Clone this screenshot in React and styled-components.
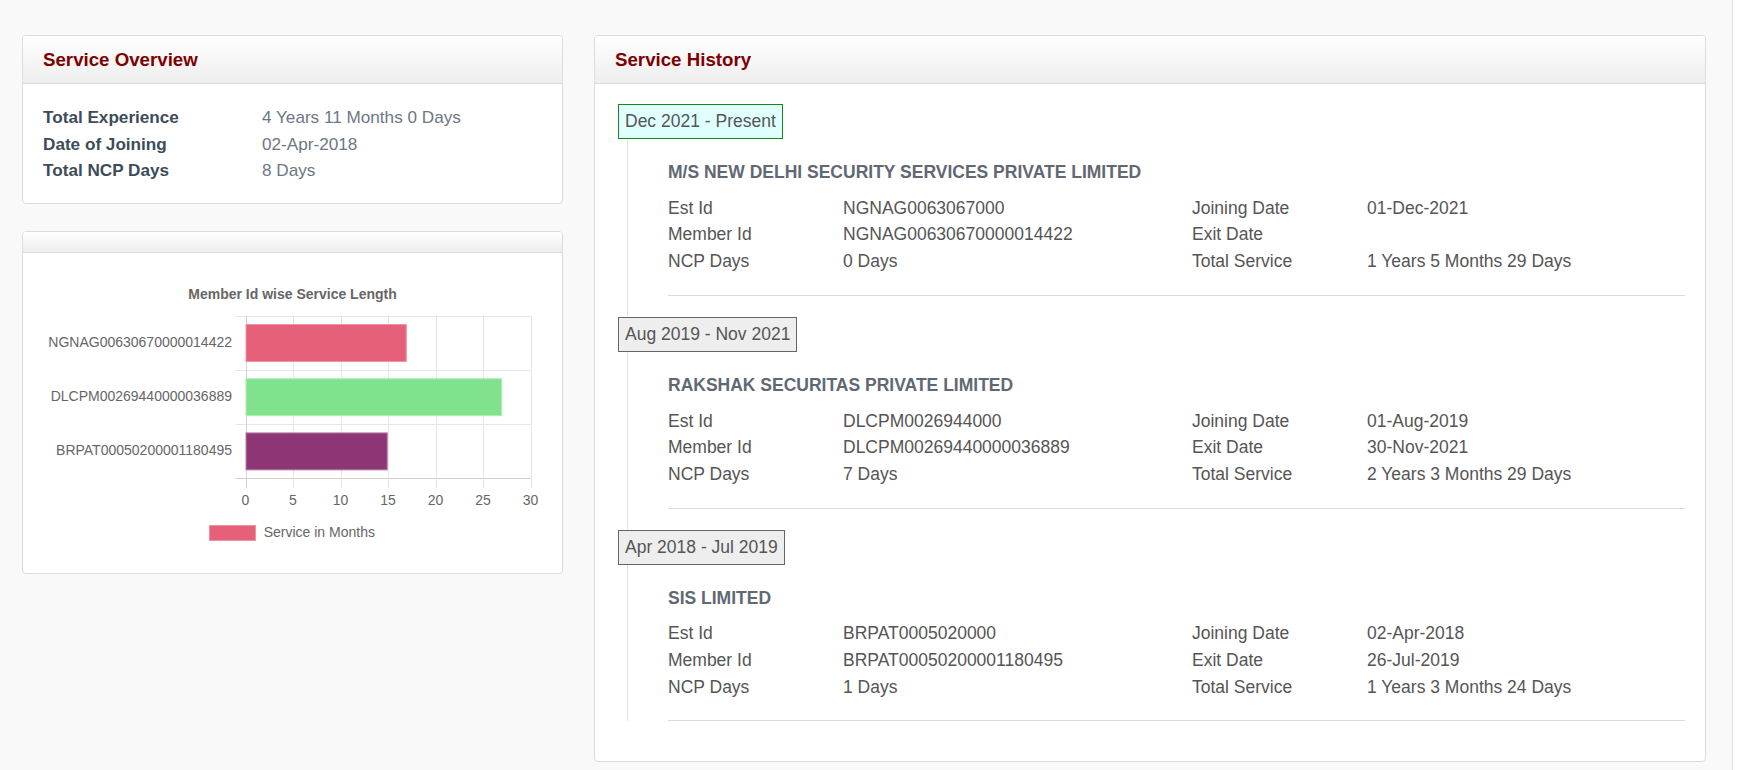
import React from 'react';
import styled, { createGlobalStyle } from 'styled-components';

const GlobalStyle = createGlobalStyle`
  body {
    margin: 0;
    background: #ffffff;
    font-family: "Liberation Sans", Arial, sans-serif;
  }
  * {
    box-sizing: border-box;
  }
`;

const Page = styled.div`
  display: flex;
  align-items: flex-start;
  gap: 31px;
  width: 1733px;
  min-height: 770px;
  padding: 35px 26px 0 22px;
  background: #f9f9f9;
  border-right: 1px solid #e6e6e6;
`;

const LeftColumn = styled.div`
  display: flex;
  flex-direction: column;
  gap: 27px;
  width: 541px;
`;

const Card = styled.div`
  width: ${(p) => p.width || 'auto'};
  background: #ffffff;
  border: 1px solid #dcdcdc;
  border-radius: 4px;
  overflow: hidden;
`;

const CardHeader = styled.div`
  height: ${(p) => (p.empty ? '21px' : '48px')};
  display: flex;
  align-items: center;
  padding: 0 20px;
  background: linear-gradient(to bottom, #ffffff 0%, #eeeeee 100%);
  border-bottom: 1px solid #dcdcdc;
`;

const CardTitle = styled.h3`
  margin: 0;
  font-size: 18.7px;
  font-weight: 700;
  color: #800000;
`;

const OverviewBody = styled.div`
  display: grid;
  grid-template-columns: 219px 1fr;
  padding: 20px 20px 19px 20px;
  font-size: 17.15px;
  line-height: 26.7px;
`;

const OverviewLabel = styled.div`
  font-weight: 700;
  color: #3c4c59;
`;

const OverviewValue = styled.div`
  color: #6c7783;
`;

const ChartSvg = styled.svg`
  display: block;
  font-family: "Liberation Sans", Arial, sans-serif;
`;

const HistoryBody = styled.div`
  padding: 20px 20px 40px 23px;
`;

const PeriodBadge = styled.div`
  display: inline-block;
  height: 35px;
  padding: 0 6px;
  line-height: 33px;
  font-size: 17.5px;
  color: #555555;
  border: 1px solid ${(p) => (p.current ? '#138a13' : '#666666')};
  background: ${(p) => (p.current ? '#e0ffff' : '#eeeeee')};
`;

const TimelineContent = styled.div`
  margin-left: 9px;
  border-left: 1px solid #e6e6e6;
  padding: 20px 0 ${(p) => (p.last ? '0' : '21px')} 40px;
`;

const CompanyName = styled.div`
  font-size: 17.5px;
  line-height: 26.7px;
  font-weight: 700;
  color: #5f6873;
  text-transform: uppercase;
`;

const DetailGrid = styled.div`
  display: grid;
  grid-template-columns: 175px 349px 175px 1fr;
  margin-top: 9px;
  font-size: 17.5px;
  line-height: 26.7px;
  color: #555555;
`;

const Separator = styled.hr`
  margin: 20px 0 0 0;
  border: 0;
  border-top: 1px solid #dadada;
`;

const overview = [
  ['Total Experience', '4 Years 11 Months 0 Days'],
  ['Date of Joining', '02-Apr-2018'],
  ['Total NCP Days', '8 Days'],
];

const history = [
  {
    period: 'Dec 2021 - Present',
    current: true,
    company: 'M/S New Delhi Security Services Private Limited',
    estId: 'NGNAG0063067000',
    memberId: 'NGNAG00630670000014422',
    ncp: '0 Days',
    joining: '01-Dec-2021',
    exit: '',
    total: '1 Years 5 Months 29 Days',
  },
  {
    period: 'Aug 2019 - Nov 2021',
    company: 'Rakshak Securitas Private Limited',
    estId: 'DLCPM0026944000',
    memberId: 'DLCPM00269440000036889',
    ncp: '7 Days',
    joining: '01-Aug-2019',
    exit: '30-Nov-2021',
    total: '2 Years 3 Months 29 Days',
  },
  {
    period: 'Apr 2018 - Jul 2019',
    company: 'SIS Limited',
    estId: 'BRPAT0005020000',
    memberId: 'BRPAT00050200001180495',
    ncp: '1 Days',
    joining: '02-Apr-2018',
    exit: '26-Jul-2019',
    total: '1 Years 3 Months 24 Days',
  },
];

const bars = [
  { id: 'NGNAG00630670000014422', months: 16.87, fill: '#e6607a', stroke: '#ee93a4' },
  { id: 'DLCPM00269440000036889', months: 26.92, fill: '#80e28c', stroke: '#b0efb7' },
  { id: 'BRPAT00050200001180495', months: 14.87, fill: '#8e3675', stroke: '#b582a7' },
];

// chart geometry, px inside the chart card body
const PLOT_LEFT = 222.5;
const PLOT_TOP = 62.5;
const ROW_H = 54.2;
const UNIT = 9.5;
const PLOT_RIGHT = PLOT_LEFT + 30 * UNIT;
const PLOT_BOTTOM = PLOT_TOP + 3 * ROW_H;

function ServiceChart() {
  const ticks = [0, 5, 10, 15, 20, 25, 30];
  return (
    <ChartSvg width="539" height="320">
      <text x="269.5" y="45.7" textAnchor="middle" fontSize="14" fontWeight="700" fill="#666">
        Member Id wise Service Length
      </text>
      {[0, 1, 2, 3].map((i) => (
        <line
          key={'h' + i}
          x1={PLOT_LEFT - 10}
          x2={PLOT_RIGHT}
          y1={Math.round(PLOT_TOP + i * ROW_H) + 0.5}
          y2={Math.round(PLOT_TOP + i * ROW_H) + 0.5}
          stroke={i === 3 ? '#cfcfcf' : '#e6e6e6'}
          strokeWidth="1"
        />
      ))}
      {ticks.map((t, k) => (
        <line
          key={'v' + t}
          x1={Math.round(PLOT_LEFT + k * 5 * UNIT) + 0.5}
          x2={Math.round(PLOT_LEFT + k * 5 * UNIT) + 0.5}
          y1={PLOT_TOP}
          y2={PLOT_BOTTOM + 10}
          stroke={k === 0 ? '#d2d2d2' : '#e6e6e6'}
          strokeWidth="1"
        />
      ))}
      {bars.map((b, i) => (
        <g key={b.id}>
          <rect
            x={PLOT_LEFT + 0.5}
            y={PLOT_TOP + i * ROW_H + 9}
            width={b.months * UNIT}
            height="37"
            fill={b.fill}
            stroke={b.stroke}
            strokeWidth="1"
          />
          <text x="209" y={PLOT_TOP + i * ROW_H + 31} textAnchor="end" fontSize="14" fill="#666">
            {b.id}
          </text>
        </g>
      ))}
      {ticks.map((t, k) => (
        <text key={'t' + t} x={PLOT_LEFT + k * 5 * UNIT} y="251.7" textAnchor="middle" fontSize="14" fill="#666">
          {t}
        </text>
      ))}
      <rect x="186.5" y="272.5" width="46" height="15" fill="#e6607a" stroke="#ee93a4" strokeWidth="1" />
      <text x="240.7" y="284.4" fontSize="14" fill="#666">
        Service in Months
      </text>
    </ChartSvg>
  );
}

function HistoryItem({ item, last }) {
  return (
    <div>
      <PeriodBadge current={item.current}>{item.period}</PeriodBadge>
      <TimelineContent last={last}>
        <CompanyName>{item.company}</CompanyName>
        <DetailGrid>
          <div>Est Id</div>
          <div>{item.estId}</div>
          <div>Joining Date</div>
          <div>{item.joining}</div>
          <div>Member Id</div>
          <div>{item.memberId}</div>
          <div>Exit Date</div>
          <div>{item.exit}</div>
          <div>NCP Days</div>
          <div>{item.ncp}</div>
          <div>Total Service</div>
          <div>{item.total}</div>
        </DetailGrid>
        <Separator />
      </TimelineContent>
    </div>
  );
}

export default function App() {
  return (
    <>
      <GlobalStyle />
      <Page>
        <LeftColumn>
          <Card>
            <CardHeader>
              <CardTitle>Service Overview</CardTitle>
            </CardHeader>
            <OverviewBody>
              {overview.map(([label, value]) => (
                <React.Fragment key={label}>
                  <OverviewLabel>{label}</OverviewLabel>
                  <OverviewValue>{value}</OverviewValue>
                </React.Fragment>
              ))}
            </OverviewBody>
          </Card>
          <Card>
            <CardHeader empty />
            <ServiceChart />
          </Card>
        </LeftColumn>
        <Card width="1112px">
          <CardHeader>
            <CardTitle>Service History</CardTitle>
          </CardHeader>
          <HistoryBody>
            {history.map((item, i) => (
              <HistoryItem key={item.period} item={item} last={i === history.length - 1} />
            ))}
          </HistoryBody>
        </Card>
      </Page>
    </>
  );
}
